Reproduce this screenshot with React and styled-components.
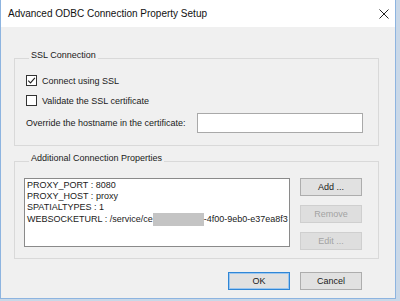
import React from "react";
import styled, { createGlobalStyle } from "styled-components";

const GlobalStyle = createGlobalStyle`
  html, body {
    margin: 0;
    padding: 0;
    background: #c9d8e8;
  }
  body {
    font-family: "Liberation Sans", Arial, sans-serif;
    color: #1a1a1a;
  }
`;

const properties = [
  { id: 1, key: "PROXY_PORT", value: "8080" },
  { id: 2, key: "PROXY_HOST", value: "proxy" },
  { id: 3, key: "SPATIALTYPES", value: "1" },
];

const CheckMark = () => (
  <svg width="9" height="9" viewBox="0 0 9 9">
    <path d="M1.2 4.6 L3.5 6.9 L7.9 1.8" fill="none" stroke="#222" strokeWidth="1.1" />
  </svg>
);

const CloseIcon = () => (
  <svg width="10" height="10" viewBox="0 0 10 10">
    <path d="M0.5 0.5 L9.5 9.5 M9.5 0.5 L0.5 9.5" stroke="#222" strokeWidth="1" />
  </svg>
);

const App = () => {
  return (
    <>
      <GlobalStyle />
      <Window>
        <TitleBar>
          <Title>Advanced ODBC Connection Property Setup</Title>
          <CloseBtn>
            <CloseIcon />
          </CloseBtn>
        </TitleBar>
        <Body>
          <Group $top={23} $padTop={7} $padBottom={12} $padRight={15}>
            <Legend>SSL Connection</Legend>
            <Stack>
              <CheckRow>
                <Box>
                  <CheckMark />
                </Box>
                <Label>Connect using SSL</Label>
              </CheckRow>
              <CheckRow>
                <Box />
                <Label>Validate the SSL certificate</Label>
              </CheckRow>
              <FieldRow>
                <Label>Override the hostname in the certificate:</Label>
                <TextInput />
              </FieldRow>
            </Stack>
          </Group>
          <Group $top={7} $padTop={9} $padBottom={8} $padRight={16}>
            <Legend>Additional Connection Properties</Legend>
            <PropsArea>
              <ListBox>
                {properties.map((p) => (
                  <ListLine key={p.id}>
                    {p.key} : {p.value}
                  </ListLine>
                ))}
                <ListLine>
                  WEBSOCKETURL : /service/ce
                  <Redacted />
                  -4f00-9eb0-e37ea8f3
                </ListLine>
              </ListBox>
              <SideButtons>
                <Button>Add ...</Button>
                <Button disabled>Remove</Button>
                <Button disabled>Edit ...</Button>
              </SideButtons>
            </PropsArea>
          </Group>
          <Footer>
            <Button $primary>OK</Button>
            <Button>Cancel</Button>
          </Footer>
        </Body>
      </Window>
    </>
  );
};

export default App;

const Window = styled.div`
  width: 394px;
  height: 298px;
  background: #f0f0f0;
  border: 1px solid #8db4e0;
  border-top: none;
  display: flex;
  flex-direction: column;
`;

const TitleBar = styled.div`
  height: 27px;
  background: #ffffff;
  display: flex;
  align-items: center;
  justify-content: space-between;
  padding: 0 6px 0 7px;
`;

const Title = styled.div`
  font-size: 10px;
  color: #111;
`;

const CloseBtn = styled.div`
  width: 10px;
  height: 10px;
  display: flex;
`;

const Body = styled.div`
  flex: 1;
  display: flex;
  flex-direction: column;
  padding: 0 16px 0 13px;
`;

const Group = styled.fieldset`
  margin: ${({ $top }) => $top}px 0 0 0;
  min-width: 0;
  border: 1px solid #d9d9d9;
  padding: ${({ $padTop }) => $padTop}px ${({ $padRight }) => $padRight}px
    ${({ $padBottom }) => $padBottom}px 9px;
`;

const Legend = styled.legend`
  font-size: 9px;
  line-height: 11px;
  padding: 0 2px 5px;
  margin-left: 5px;
  color: #1a1a1a;
`;

const Stack = styled.div`
  display: flex;
  flex-direction: column;
  gap: 5px;
  padding-left: 2px;
`;

const CheckRow = styled.div`
  height: 15px;
  display: flex;
  align-items: center;
  gap: 5px;
`;

const Box = styled.div`
  width: 9px;
  height: 9px;
  border: 1px solid #333;
  background: #fff;
  display: flex;
  align-items: center;
  justify-content: center;
`;

const Label = styled.span`
  font-size: 9px;
  color: #1a1a1a;
  white-space: nowrap;
`;

const FieldRow = styled.div`
  height: 20px;
  display: flex;
  align-items: center;
`;

const TextInput = styled.div`
  margin-left: auto;
  width: 164px;
  height: 18px;
  background: #fff;
  border: 1px solid #a9a9a9;
`;

const PropsArea = styled.div`
  display: flex;
  justify-content: space-between;
  align-items: flex-start;
`;

const ListBox = styled.div`
  width: 262px;
  height: 66px;
  background: #fff;
  border: 1px solid #8a8a8a;
  padding: 1px 0 0 2px;
  overflow: hidden;
  box-sizing: content-box;
`;

const ListLine = styled.div`
  font-size: 9px;
  line-height: 11px;
  white-space: nowrap;
  color: #1a1a1a;
`;

const Redacted = styled.span`
  display: inline-block;
  width: 51px;
  height: 13px;
  background: #c4c4c4;
  vertical-align: middle;
`;

const SideButtons = styled.div`
  display: flex;
  flex-direction: column;
  gap: 9px;
`;

const Button = styled.button`
  width: 62px;
  height: 18px;
  padding: 0;
  font-family: "Liberation Sans", Arial, sans-serif;
  font-size: 9px;
  color: ${({ disabled }) => (disabled ? "#a3a3a3" : "#1a1a1a")};
  background: ${({ disabled }) => (disabled ? "#dedede" : "#e1e1e1")};
  border: 1px solid
    ${({ disabled, $primary }) =>
      $primary ? "#2f86d6" : disabled ? "#cfcfcf" : "#adadad"};
  box-shadow: ${({ $primary }) => ($primary ? "inset 0 0 0 1px #9cc6ee" : "none")};
`;

const Footer = styled.div`
  display: flex;
  justify-content: flex-end;
  gap: 10px;
  margin-top: 13px;
  padding-right: 17px;
`;
